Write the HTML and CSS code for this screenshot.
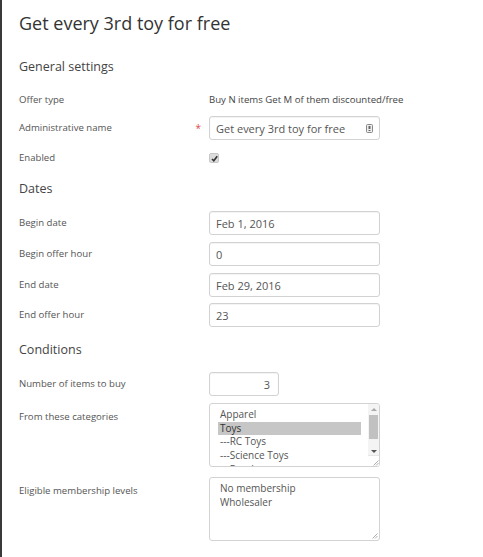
FILE: index.html
```html
<!DOCTYPE html>
<html>
<head>
<meta charset="utf-8">
<link rel="stylesheet" href="styles.css">
</head>
<body>
<div class="page">
  <h1 class="title">Get every 3rd toy for free</h1>

  <h2 class="section s-general">General settings</h2>
  <div class="row r-offer">
    <div class="label">Offer type</div>
    <div class="value">Buy N items Get M of them discounted/free</div>
  </div>
  <div class="row r-admin">
    <div class="label">Administrative name<span class="req">*</span></div>
    <div class="input wide">
      <span>Get every 3rd toy for free</span>
      <svg class="key" width="7" height="9" viewBox="0 0 7 9"><rect x="0.5" y="0.5" width="6" height="8" rx="1" fill="#eee" stroke="#888"/><rect x="2.5" y="2" width="2" height="3" fill="#666"/><rect x="2.5" y="6" width="2" height="1" fill="#666"/></svg>
    </div>
  </div>
  <div class="row r-enabled">
    <div class="label">Enabled</div>
    <div class="check"><svg width="7" height="7" viewBox="0 0 7 7"><path d="M1 4 L2.8 5.8 L6.2 1.2" fill="none" stroke="#333" stroke-width="1.6"/></svg></div>
  </div>

  <h2 class="section s-dates">Dates</h2>
  <div class="row r-field first">
    <div class="label">Begin date</div>
    <div class="input wide"><span>Feb 1, 2016</span></div>
  </div>
  <div class="row r-field">
    <div class="label">Begin offer hour</div>
    <div class="input wide"><span>0</span></div>
  </div>
  <div class="row r-field">
    <div class="label">End date</div>
    <div class="input wide"><span>Feb 29, 2016</span></div>
  </div>
  <div class="row r-field last">
    <div class="label">End offer hour</div>
    <div class="input wide"><span>23</span></div>
  </div>

  <h2 class="section s-cond">Conditions</h2>
  <div class="row r-num">
    <div class="label">Number of items to buy</div>
    <div class="input narrow"><span>3</span></div>
  </div>
  <div class="row r-top r-cat">
    <div class="label">From these categories</div>
    <div class="listbox">
      <div class="options">
        <div class="opt">Apparel</div>
        <div class="opt sel">Toys</div>
        <div class="opt">---RC Toys</div>
        <div class="opt">---Science Toys</div>
        <div class="opt">---Puzzles</div>
      </div>
      <div class="scroll">
        <div class="arrow up"></div>
        <div class="thumb"></div>
        <div class="arrow down"></div>
        <div class="corner"><svg width="7" height="7" viewBox="0 0 7 7"><path d="M6.5 1.5 L1.5 6.5 M6.5 4 L4 6.5" stroke="#999" stroke-width="0.8"/></svg></div>
      </div>
    </div>
  </div>
  <div class="row r-top r-member">
    <div class="label">Eligible membership levels</div>
    <div class="textarea">
      <div class="opt">No membership</div>
      <div class="opt">Wholesaler</div>
      <svg class="grip" width="7" height="7" viewBox="0 0 7 7"><path d="M6.5 1.5 L1.5 6.5 M6.5 4 L4 6.5" stroke="#999" stroke-width="0.8"/></svg>
    </div>
  </div>
</div>
</body>
</html>
```

FILE: styles.css
```css
* { box-sizing: border-box; }
html, body { margin: 0; padding: 0; background: #fff; }
body { font-family: "Open Sans", "Noto Sans", sans-serif; color: #555; }

.page {
  border-left: 2px solid #3a3a3a;
  min-height: 557px;
  padding: 11px 0 0 17px;
}

.title {
  margin: 0;
  font-size: 18px;
  line-height: 24px;
  font-weight: 400;
  color: #333;
}

.section {
  margin: 0;
  font-size: 12.5px;
  line-height: 20px;
  font-weight: 400;
  color: #444;
}
.s-general { margin-top: 22px; }
.s-dates { margin-top: 14px; }
.s-cond { margin-top: 13px; }

.row { display: flex; align-items: center; }
.r-top { align-items: flex-start; }
.label {
  width: 190px;
  flex: none;
  display: flex;
  font-size: 9.6px;
  line-height: 14px;
  color: #555;
}
.req { margin-left: auto; margin-right: 8px; color: #e04b4b; font-size: 10px; }

.value { font-size: 9.6px; line-height: 14px; color: #444; }

.r-offer { margin-top: 16px; }
.r-admin { margin-top: 9px; }
.r-enabled { margin-top: 11px; }
.r-field { margin-top: 7px; }
.r-field.first { margin-top: 12px; }
.r-field.last { margin-top: 6px; }
.r-num { margin-top: 12px; }
.r-cat { margin-top: 7px; }
.r-member { margin-top: 10px; }

.r-cat .label { margin-top: 7px; }
.r-member .label { margin-top: 7px; }

.input {
  height: 24px;
  border: 1px solid #d2d2d2;
  border-radius: 3px;
  box-shadow: inset 0 1px 1px rgba(0,0,0,0.05);
  display: flex;
  align-items: center;
  padding: 0 6px;
  font-size: 11px;
  color: #555;
}
.wide { width: 171px; }
.narrow { width: 70px; justify-content: flex-end; padding-right: 8px; }
.input span { flex: 1; }
.narrow span { flex: none; }
.key { flex: none; }

.check {
  width: 10px;
  height: 10px;
  border-radius: 2px;
  background: #dcdcdc;
  border: 1px solid #c8c8c8;
  display: flex;
  align-items: center;
  justify-content: center;
}

.listbox {
  width: 171px;
  height: 64px;
  border: 1px solid #d2d2d2;
  border-radius: 3px;
  display: flex;
  overflow: hidden;
}
.options {
  flex: 1;
  padding: 4px 7px 0 8px;
  overflow: hidden;
}
.opt {
  font-size: 10px;
  line-height: 13.7px;
  color: #555;
  padding-left: 2px;
  white-space: nowrap;
}
.opt.sel { background: #c6c6c6; color: #333; }

.scroll {
  width: 11px;
  flex: none;
  background: #f4f4f4;
  display: flex;
  flex-direction: column;
  align-items: center;
}
.arrow { width: 0; height: 0; border-left: 3px solid transparent; border-right: 3px solid transparent; }
.arrow.up { border-bottom: 3px solid #aaa; margin-top: 4px; }
.arrow.down { border-top: 3px solid #555; margin-top: 11px; }
.thumb { width: 9px; height: 24px; background: #c1c1c1; margin-top: 4px; }
.corner {
  margin-top: auto;
  width: 11px;
  height: 11px;
  background: #fff;
  border-top: 1px solid #e6e6e6;
  display: flex;
  align-items: flex-end;
  justify-content: flex-end;
}

.textarea {
  position: relative;
  width: 171px;
  height: 64px;
  border: 1px solid #d2d2d2;
  border-radius: 3px;
  padding: 4px 8px 0 9px;
}
.textarea .opt { padding-left: 1px; }
.grip { position: absolute; right: 1px; bottom: 1px; }
```
